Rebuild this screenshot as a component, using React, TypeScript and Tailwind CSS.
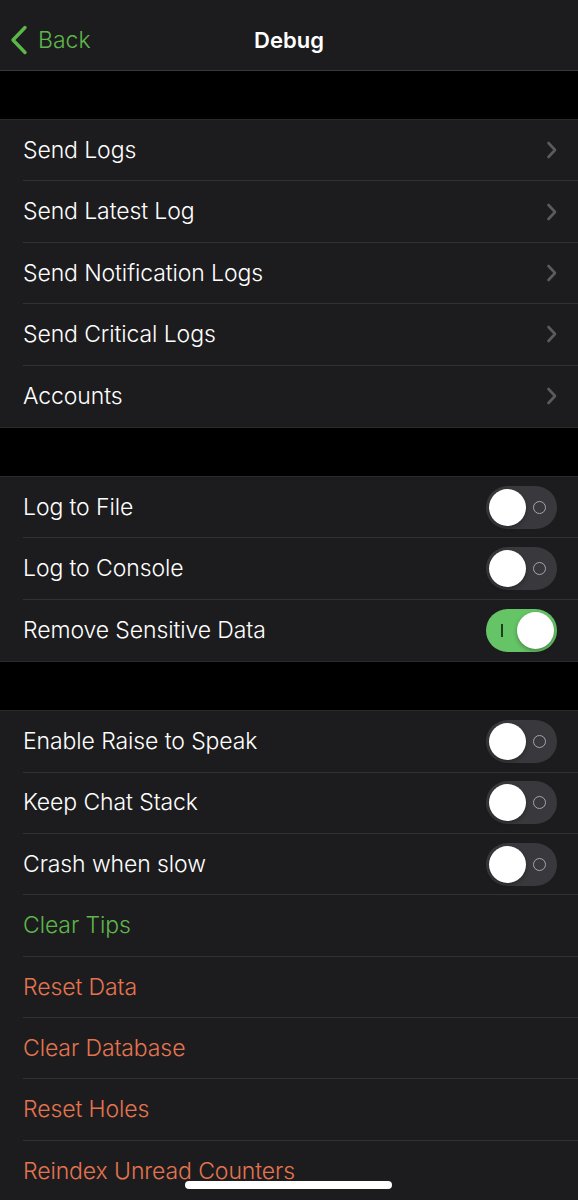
import React from 'react';

type Row =
  | { kind: 'nav'; label: string }
  | { kind: 'toggle'; label: string; on: boolean }
  | { kind: 'action'; label: string; tone: 'green' | 'orange' };

const groups: Row[][] = [
  [
    { kind: 'nav', label: 'Send Logs' },
    { kind: 'nav', label: 'Send Latest Log' },
    { kind: 'nav', label: 'Send Notification Logs' },
    { kind: 'nav', label: 'Send Critical Logs' },
    { kind: 'nav', label: 'Accounts' },
  ],
  [
    { kind: 'toggle', label: 'Log to File', on: false },
    { kind: 'toggle', label: 'Log to Console', on: false },
    { kind: 'toggle', label: 'Remove Sensitive Data', on: true },
  ],
  [
    { kind: 'toggle', label: 'Enable Raise to Speak', on: false },
    { kind: 'toggle', label: 'Keep Chat Stack', on: false },
    { kind: 'toggle', label: 'Crash when slow', on: false },
    { kind: 'action', label: 'Clear Tips', tone: 'green' },
    { kind: 'action', label: 'Reset Data', tone: 'orange' },
    { kind: 'action', label: 'Clear Database', tone: 'orange' },
    { kind: 'action', label: 'Reset Holes', tone: 'orange' },
    { kind: 'action', label: 'Reindex Unread Counters', tone: 'orange' },
  ],
];

function Switch({ on }: { on: boolean }) {
  if (on) {
    return (
      <div className="relative flex h-[43px] w-[71px] items-center justify-end rounded-full bg-[#65c466] p-[3px]">
        <span className="absolute left-[15px] top-[15px] h-[13px] w-[2px] bg-[#1f3d1f]" />
        <span className="h-[37px] w-[37px] rounded-full bg-white shadow-[0_2px_4px_rgba(0,0,0,0.3)]" />
      </div>
    );
  }
  return (
    <div className="relative flex h-[43px] w-[71px] items-center rounded-full bg-[#39393d] p-[3px]">
      <span className="absolute right-[11px] top-[15px] h-[13px] w-[13px] rounded-full border-[1.5px] border-[#a5a5aa]" />
      <span className="h-[37px] w-[37px] rounded-full bg-white shadow-[0_2px_4px_rgba(0,0,0,0.3)]" />
    </div>
  );
}

function Chevron() {
  return (
    <svg width="12" height="18" viewBox="0 0 12 18" className="mr-[20px]">
      <path d="M2.5 2 L9 9 L2.5 16" fill="none" stroke="#5b5b5f" strokeWidth="2.6" strokeLinecap="round" strokeLinejoin="round" />
    </svg>
  );
}

function SettingRow({ row, last }: { row: Row; last: boolean }) {
  let color = 'text-white';
  if (row.kind === 'action') color = row.tone === 'green' ? 'text-[#5db64a]' : 'text-[#e4744f]';
  return (
    <div className="bg-[#1c1c1e] pl-[23px]">
      <div className={`flex h-[61.4px] items-center justify-between ${last ? '' : 'border-b border-[#323234]'}`}>
        <span className={`text-[23px] font-light tracking-[-0.1px] ${color}`}>{row.label}</span>
        {row.kind === 'nav' && <Chevron />}
        {row.kind === 'toggle' && (
          <div className="mr-[21px]">
            <Switch on={row.on} />
          </div>
        )}
      </div>
    </div>
  );
}

export default function App() {
  return (
    <div className="relative h-[1200px] w-[578px] overflow-hidden bg-black" style={{ fontFamily: 'Inter, "Noto Sans", sans-serif' }}>
      {/* Nav bar */}
      <div className="relative flex h-[71px] items-center justify-center border-b border-[#38383a] bg-[#1c1c1e] pt-[10px]">
        <div className="absolute left-[10px] top-0 flex h-full items-center gap-[10px] pt-[10px]">
          <svg width="18" height="30" viewBox="0 0 18 30">
            <path d="M15 2.5 L3 15 L15 27.5" fill="none" stroke="#5db64a" strokeWidth="3.4" strokeLinecap="round" strokeLinejoin="round" />
          </svg>
          <span className="text-[23px] font-light text-[#5db64a]">Back</span>
        </div>
        <span className="text-[22px] font-semibold text-white">Debug</span>
      </div>

      {groups.map((g, gi) => (
        <div key={gi} className="pt-[48px]">
          <div className="border-y border-[#2a2a2c]">
            {g.map((row, i) => (
              <SettingRow key={row.label} row={row} last={i === g.length - 1} />
            ))}
          </div>
        </div>
      ))}

      {/* Home indicator */}
      <div className="absolute bottom-[11px] left-[185px] h-[8px] w-[207px] rounded-full bg-white" />
    </div>
  );
}
